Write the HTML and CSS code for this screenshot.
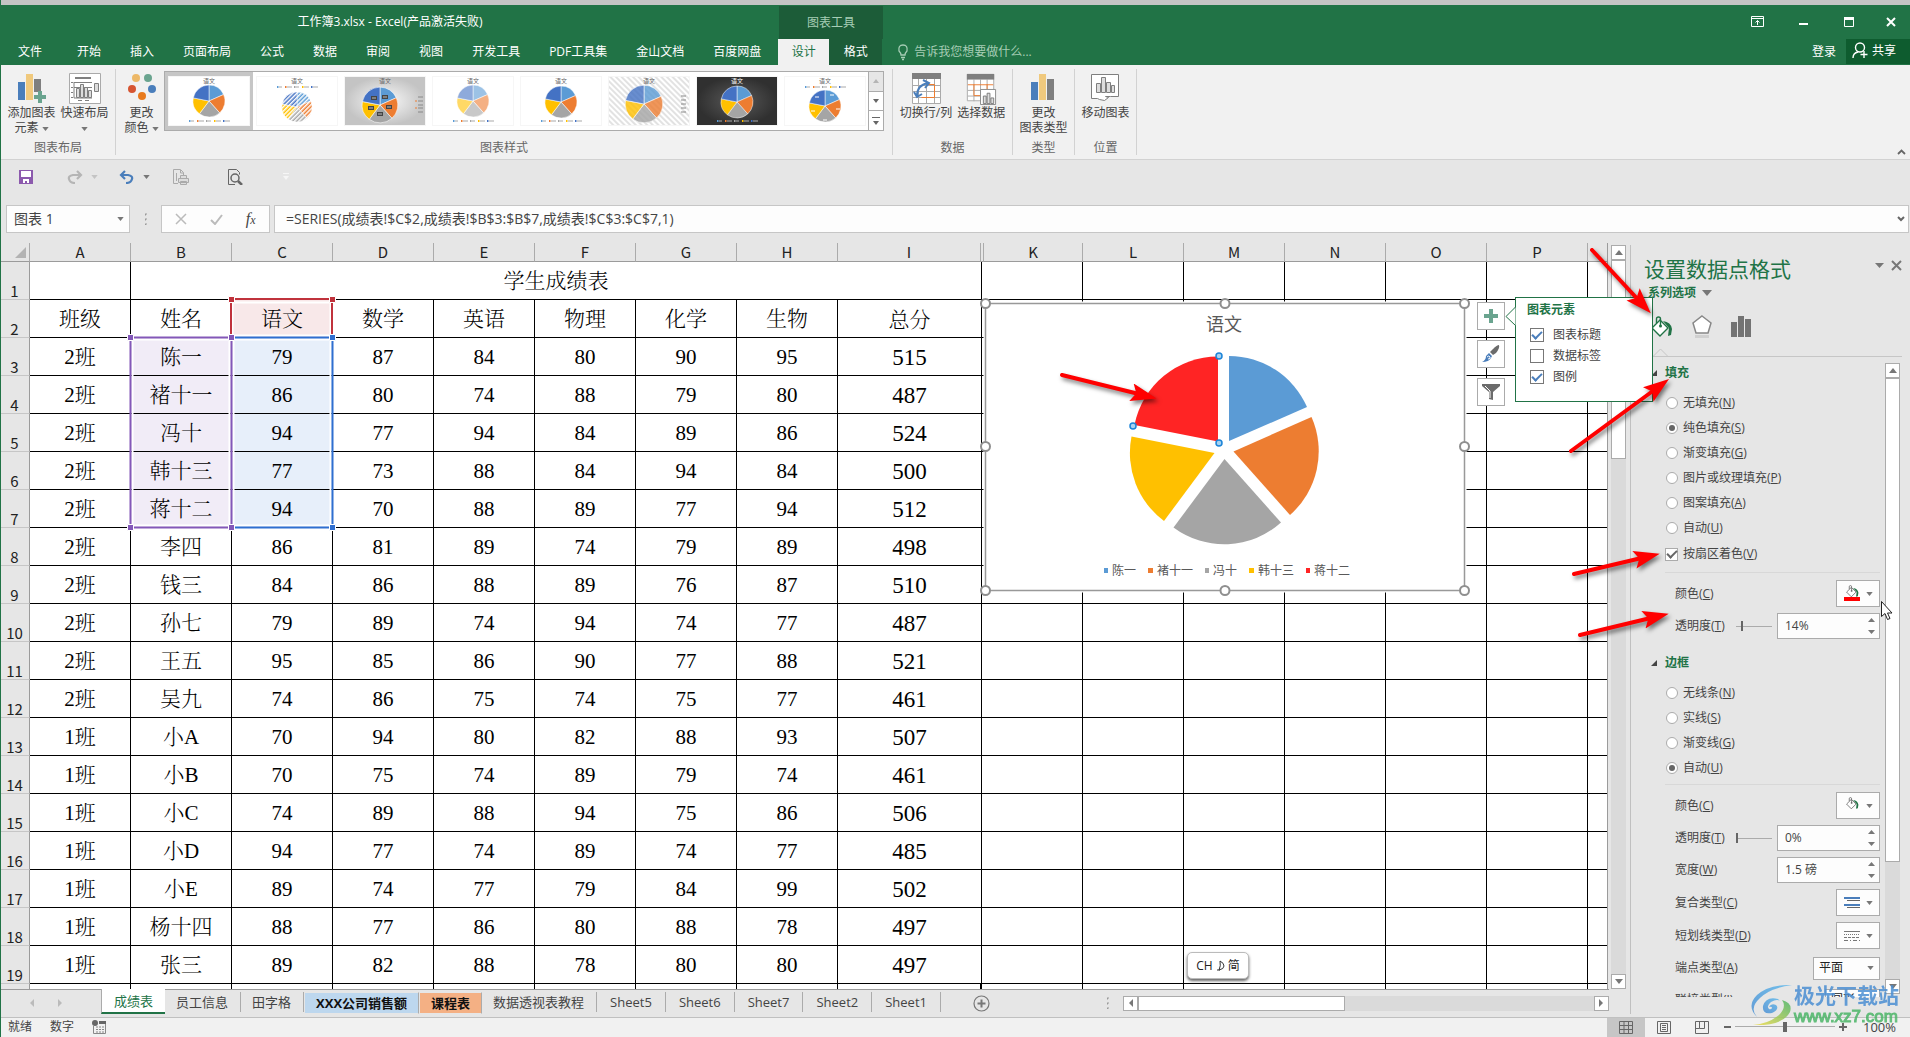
FILE: index.html
```html
<!DOCTYPE html>
<html lang="zh-CN">
<head>
<meta charset="utf-8">
<title>工作簿3.xlsx - Excel</title>
<link rel="stylesheet" href="styles.css">
</head>
<body>
<svg class="defs" width="0" height="0" aria-hidden="true">
  <defs>
    <pattern id="hatch" width="3" height="3" patternUnits="userSpaceOnUse" patternTransform="rotate(45)"><rect width="1.5" height="3" fill="#fff"/></pattern>
    <pattern id="stripes" width="4" height="4" patternUnits="userSpaceOnUse" patternTransform="rotate(-45)"><rect width="4" height="4" fill="#fff"/><rect width="2" height="4" fill="#e2e2e2"/></pattern>
    <radialGradient id="silver"><stop offset="0" stop-color="#fafafa"/><stop offset="1" stop-color="#c4c4c4"/></radialGradient>
    <radialGradient id="night"><stop offset="0" stop-color="#5a5a5a"/><stop offset="1" stop-color="#303030"/></radialGradient>
    <symbol id="pie" viewBox="-17 -17 34 34">
      <g stroke="#fff" stroke-width=".5">
      <path fill="#5b9bd5" d="M0 0V-16A16 16 0 0 1 14.6-6.5Z"/>
      <path fill="#ed7d31" d="M0 0 14.6-6.5A16 16 0 0 1 10.7 11.9Z"/>
      <path fill="#a5a5a5" d="M0 0 10.7 11.9A16 16 0 0 1-9.6 12.8Z"/>
      <path fill="#ffc000" d="M0 0-9.6 12.8A16 16 0 0 1-15.7-3.1Z"/>
      <path fill="#4472c4" d="M0 0-15.7-3.1A16 16 0 0 1 0-16Z"/>
      </g>
    </symbol>
    <symbol id="keys" viewBox="0 0 42 4">
      <g fill="#aaa"><path d="M3 1.500h3v1h-3zM11 1.500h5v1h-5zM20 1.500h3v1h-3zM28 1.500h5v1h-5zM37 1.500h5v1h-5z"/></g>
      <path fill="#5b9bd5" d="M1 1h1.500v2H1z"/><path fill="#ed7d31" d="M9 1h1.500v2H9z"/><path fill="#a5a5a5" d="M18 1h1.500v2h-1.500z"/><path fill="#ffc000" d="M26 1h1.500v2h-1.500z"/><path fill="#4472c4" d="M35 1h1.500v2h-1.500z"/>
    </symbol>
    <symbol id="bucket" viewBox="0 0 22 22">
      <path class="paint" d="M12 5q8 1 9 8l-1 6-3 1 1-8z"/>
      <path d="M1 12 9 4l8 8-8 8z" fill="#fff" stroke="currentColor" stroke-width="1.400"/>
      <path d="M5.500 7V3q0-2 2-2t2 2v7" fill="none" stroke="currentColor" stroke-width="1.400"/><circle cx="9.500" cy="10" r="1.500" fill="currentColor"/>
    </symbol>
    <symbol id="down" viewBox="0 0 8 5"><path d="M0 0h8L4 5z" fill="currentColor"/></symbol>
    <marker id="head" markerWidth="26" markerHeight="20" refX="16" refY="9" orient="auto" markerUnits="userSpaceOnUse"><path d="M0 0 26 9 0 18 5 9z" fill="#f00"/></marker>
  </defs>
</svg>

<header class="top">
  <div class="titlebar">
    <h1 class="doc-title">工作簿3.xlsx - Excel(产品激活失败)</h1>
    <div class="context-title">图表工具</div>
    <div class="window-buttons">
      <button aria-label="功能区显示选项"><svg width="13" height="11" fill="none" stroke="#fff"><path d="M.5.5h12v10H.5zM1 2.500h11M6.500 9V4.500M4.500 6.500l2-2 2 2"/></svg></button>
      <button aria-label="最小化"><svg width="10" height="10"><path d="M1 6h9v2H1z" fill="#fff"/></svg></button>
      <button aria-label="最大化"><svg width="10" height="10"><path d="M.5.5h9v9h-9z" fill="none" stroke="#fff"/><path d="M0 0h10v3H0z" fill="#fff"/></svg></button>
      <button aria-label="关闭"><svg width="10" height="10"><path d="m1 1 8 8m0-8L1 9" stroke="#fff" stroke-width="2"/></svg></button>
    </div>
  </div>
  <nav class="tabs">
    <button class="file">文件</button><button>开始</button><button>插入</button><button>页面布局</button><button>公式</button><button>数据</button><button>审阅</button><button>视图</button><button>开发工具</button><button>PDF工具集</button><button>金山文档</button><button class="last">百度网盘</button><button class="current">设计</button><button class="context">格式</button>
    <label class="tellme"><svg width="12" height="17" fill="none" stroke="#a6cdb5" stroke-width="1.300"><path d="M4 11q0-2-2-4-1-6 4-6t4 6q-2 2-2 4zM4 13.500h4M5 15.500h2"/></svg><input type="text" placeholder="告诉我您想要做什么..."></label>
    <button class="login">登录</button>
    <button class="share"><svg width="16" height="17" fill="none" stroke="#fff" stroke-width="1.400"><circle cx="8" cy="5.500" r="4.500"/><path d="M1 16q0-5 5-6M12 9v7M8.500 12.500h7"/></svg>共享</button>
  </nav>
</header>

<section class="ribbon">
  <div class="group first">
    <div class="tools">
      <button class="tool"><svg width="32" height="32"><path fill="#4a7ebb" d="M3 9h7v18H3z"/><path fill="#f0c97d" d="M11 1h7v26h-7z"/><path fill="#7f7f7f" d="M19 6h7v13h-7z"/><path fill="#6aa48f" d="M23 18h4v4h4v4h-4v4h-4v-4h-4v-4h4z"/></svg><span>添加图表<br>元素 <svg class="dd"><use href="#down"/></svg></span></button>
      <button class="tool"><svg width="32" height="32" fill="none" stroke="#7f7f7f"><path fill="#fff" stroke="#aaa" d="M.5.5h31v30H.5z"/><path stroke-width="2" d="M6 5h16"/><path d="M5 9.500h18M5 14.500h18M2 9.500h2M2 14.500h2M2 19.500h2M2 24.500h2M5 9v16h18M9 27.500h4M16 27.500h4"/><path fill="#ddd" d="M7.500 15.500h3v9h-3zM11.500 11.500h3v13h-3zM15.500 14.500h3v10h-3zM19.500 17.500h3v7h-3zM25.500 10.500h4v8h-4z"/></svg><span>快速布局<br><svg class="dd"><use href="#down"/></svg></span></button>
    </div>
    <div class="caption">图表布局</div>
  </div>
  <div class="group styles">
    <div class="tools">
      <button class="tool colors"><svg width="32" height="32"><circle cx="10" cy="5" r="4" fill="#edb867"/><circle cx="22" cy="5" r="4" fill="#6aa48f"/><circle cx="6" cy="16" r="4" fill="#d65532"/><circle cx="26" cy="16" r="4" fill="#4a7ebb"/><circle cx="16" cy="23" r="4" fill="#e87a1d"/></svg><span>更改<br>颜色 <svg class="dd"><use href="#down"/></svg></span></button>
      <div class="gallery">
        <button class="thumb chosen" aria-label="样式 1"><svg width="80" height="48"><rect width="80" height="48" fill="#fff"/><text x="40" y="6">语文</text><use href="#pie" x="23" y="7" width="34" height="34"/><use href="#keys" x="19" y="42" width="42" height="4"/></svg></button>
        <button class="thumb" aria-label="样式 2"><svg width="80" height="48"><text x="40" y="6">语文</text><use href="#keys" x="19" y="8" width="42" height="4"/><use href="#pie" x="24" y="14" width="32" height="32"/><circle cx="40" cy="30" r="15.500" fill="url(#hatch)"/></svg></button>
        <button class="thumb" aria-label="样式 3"><svg width="80" height="48"><rect width="80" height="48" fill="url(#silver)"/><text x="40" y="6">语文</text><use href="#pie" x="16" y="9" width="38" height="38"/><path fill="#444" d="M26 19h6v4h-6zM37 18h6v4h-6zM23 29h6v4h-6zM41 28h6v4h-6zM32 35h6v4h-6z"/><path stroke="#bbb" d="M27 21h4M38 20h4M24 31h4M42 30h4M33 37h4"/><path stroke="#888" d="M73 20h5M73 24h5M73 28h5M73 31h5M73 35h5"/><path stroke="#ed7d31" d="M70 24h2M70 31h2"/></svg></button>
        <button class="thumb" aria-label="样式 4"><svg width="80" height="48"><text x="40" y="6">语文</text><use href="#pie" x="23" y="7" width="34" height="34" opacity=".6"/><use href="#keys" x="19" y="42" width="42" height="4"/></svg></button>
        <button class="thumb" aria-label="样式 5"><svg width="80" height="48"><text x="40" y="6">语文</text><use href="#pie" x="23" y="8" width="34" height="34"/><use href="#keys" x="19" y="42" width="42" height="4"/></svg></button>
        <button class="thumb" aria-label="样式 6"><svg width="80" height="48"><rect width="80" height="48" fill="url(#stripes)"/><text x="40" y="6">语文</text><use href="#pie" x="15" y="7" width="40" height="40" opacity=".8"/><path stroke="#888" d="M72 19h5M72 23h5M72 27h5M72 31h5M72 35h5"/></svg></button>
        <button class="thumb" aria-label="样式 7"><svg width="80" height="48"><rect width="80" height="48" fill="url(#night)"/><text class="light" x="40" y="6">语文</text><use href="#pie" x="23" y="8" width="34" height="34"/><use href="#keys" x="19" y="42" width="42" height="4"/></svg></button>
        <button class="thumb" aria-label="样式 8"><svg width="80" height="48"><text x="40" y="6">语文</text><use href="#keys" x="19" y="8" width="42" height="4"/><use href="#pie" x="23" y="12" width="34" height="34"/><path stroke="#fff" d="M30 20h4M45 18h4M51 32h4M38 43h4M26 34h4"/></svg></button>
        <div class="gallery-nav">
          <button class="off" aria-label="上一行"><svg width="6" height="4"><path d="M0 4h6L3 0z" fill="#b5b5b5"/></svg></button>
          <button aria-label="下一行"><svg width="6" height="4"><path d="M0 0h6L3 4z" fill="#666"/></svg></button>
          <button aria-label="其他"><svg width="8" height="8"><path d="M0 0h8v1H0zM1 4h6L4 8z" fill="#666"/></svg></button>
        </div>
      </div>
    </div>
    <div class="caption">图表样式</div>
  </div>
  <div class="group wide">
    <div class="tools">
      <button class="tool"><svg width="32" height="32" fill="none" stroke="#aaa"><path fill="#fff" d="M2.500.5h28v30h-28z"/><path d="M8.500 5v25M16.500 5v25M24.500 5v25M3 12.500h27M3 18.500h27M3 24.500h27"/><path fill="#7f7f7f" stroke="none" d="M2 0h29v6H2z"/><path stroke="#ed7d31" d="M16.500 11.500h8v13h-13"/><path stroke="#4a7ebb" stroke-width="2" d="M7 23q0-11 11-13M13 7l6 3-4 5M4 19l3 5 5-3"/></svg><span>切换行/列</span></button>
      <button class="tool"><svg width="32" height="32" viewBox="0 0 32 34" fill="none" stroke="#aaa"><path fill="#fff" d="M1.500 1.500h28v28h-28z"/><path d="M8.500 7v23M15.500 7v23M22.500 7v23M2 18.500h27M2 24.500h27"/><path fill="#7f7f7f" stroke="none" d="M1 1h29v6H1z"/><path stroke="#ed7d31" d="M2 12.500h27M8.500 12v12h8M22.500 12v6"/><path fill="#fff" stroke="#888" d="M15.500 17.500h16v16h-16z"/><path stroke="#777" fill="#ddd" d="M18.500 24.500h3v8h-3zM22.500 21.500h3v11h-3zM26.500 26.500h3v6h-3z"/></svg><span>选择数据</span></button>
    </div>
    <div class="caption">数据</div>
  </div>
  <div class="group">
    <div class="tools">
      <button class="tool"><svg width="32" height="32"><path fill="#4a7ebb" d="M4 9h7v18H4z"/><path fill="#f0c97d" d="M12 1h7v26h-7z"/><path fill="#7f7f7f" d="M20 6h7v21h-7z"/></svg><span>更改<br>图表类型</span></button>
    </div>
    <div class="caption">类型</div>
  </div>
  <div class="group">
    <div class="tools">
      <button class="tool"><svg width="32" height="32" fill="none" stroke="#7f7f7f"><path fill="#fff" d="M2.500 1.500h27v22h-8l-5 0 3 1-4 3-5-1-2-1h-6z"/><path fill="#ddd" d="M7.500 10.500h4v9h-4zM12.500 4.500h4v15h-4zM17.500 9.500h4v10h-4zM22.500 12.500h3v7h-3z"/></svg><span>移动图表</span></button>
    </div>
    <div class="caption">位置</div>
  </div>
  <button class="collapse" aria-label="折叠功能区"><svg width="9" height="6"><path d="m1 5 3.500-3.500L8 5" fill="none" stroke="#666" stroke-width="1.800"/></svg></button>
</section>

<section class="quick">
  <button aria-label="保存"><svg width="14" height="14"><path d="M0 0h14v14H0z" fill="#8c5aad"/><path d="M2 1h10v6H2zM4 9h6v4H8v-2H6v2H4z" fill="#fff"/></svg></button>
  <button class="redo" aria-label="恢复"><svg width="16" height="14" fill="none" stroke="#b5b5b5" stroke-width="2.200"><path d="M10 1l4 4-4 4M13 5H6q-5 1-4 4 1 4 6 4"/></svg><svg class="dd pale"><use href="#down"/></svg></button>
  <button class="undo" aria-label="撤消"><svg width="16" height="14" fill="none" stroke="#4a7ebb" stroke-width="2.200"><path d="M6 1 2 5l4 4M3 5h6q5 1 4 4-1 4-6 4"/></svg><svg class="dd"><use href="#down"/></svg></button>
  <button aria-label="快速打印"><svg width="17" height="16" fill="none" stroke="#aaa"><path d="M5 14.500H.5V.5h7l3 3v3M7.500 1v3h3M3.500 4v8"/><path fill="#ddd" d="M5.500 9.500h10v4h-10zM7.500 6.500h6v3h-6zM7.500 12.500h6v3h-6z"/></svg></button>
  <button class="preview" aria-label="打印预览"><svg width="15" height="16" fill="none" stroke="#666"><path d="M7 15.500H.5V.5h8l3 3v2"/><circle cx="7" cy="9" r="4" stroke-width="1.500"/><path stroke-width="2.500" d="m10 12 4 4"/></svg></button>
  <button class="more" aria-label="自定义快速访问工具栏"><svg width="6" height="8"><path d="M0 0h6v1H0zM0 3h6L3 7z" fill="#f6f6f6"/></svg></button>
</section>

<section class="formula-bar">
  <div class="namebox"><input type="text" value="图表 1" aria-label="名称框"><svg class="dd"><use href="#down"/></svg></div>
  <span class="grip"></span>
  <div class="fx">
    <button aria-label="取消"><svg width="12" height="12"><path d="m1 1 10 10M11 1 1 11" stroke="#bbb" stroke-width="1.500"/></svg></button>
    <button aria-label="输入"><svg width="13" height="11"><path d="m1 6 4 4 7-9" fill="none" stroke="#bbb" stroke-width="2"/></svg></button>
    <button class="fn" aria-label="插入函数"><i>f<small>x</small></i></button>
  </div>
  <div class="formula"><input type="text" value="=SERIES(成绩表!$C$2,成绩表!$B$3:$B$7,成绩表!$C$3:$C$7,1)" aria-label="编辑栏"><svg width="8" height="6"><path d="m1 1 3 3 3-3" fill="none" stroke="#666" stroke-width="2"/></svg></div>
</section>

<main class="workspace">
  <div class="book">
    <div class="view">
      <div class="sheet">
        <table class="grid">
          <colgroup><col class="c-num"><col class="c"><col class="c"><col class="c"><col class="c"><col class="c"><col class="c"><col class="c"><col class="c"><col class="c-sum"><col class="c-thin"><col class="c-k"><col class="c"><col class="c"><col class="c"><col class="c"><col class="c"><col></colgroup>
          <thead><tr><th class="corner"><svg width="11" height="11"><path d="M11 0v11H0z" fill="#b3b3b3"/></svg><th>A<th>B<th>C<th>D<th>E<th>F<th>G<th>H<th>I<th><th>K<th>L<th>M<th>N<th>O<th>P<th></tr></thead>
          <tbody>
          <tr><th>1<td><td colspan="8">学生成绩表<td class="j"><td><td><td><td><td><td><td></tr>
          <tr><th>2<td>班级<td>姓名<td class="series">语文<td>数学<td>英语<td>物理<td>化学<td>生物<td class="sum head">总分<td class="j"><td><td><td><td><td><td><td></tr>
          <tr><th>3<td>2班<td class="cat">陈一<td class="val">79<td>87<td>84<td>80<td>90<td>95<td class="sum">515<td class="j"><td><td><td><td><td><td><td></tr>
          <tr><th>4<td>2班<td class="cat">褚十一<td class="val">86<td>80<td>74<td>88<td>79<td>80<td class="sum">487<td class="j"><td><td><td><td><td><td><td></tr>
          <tr><th>5<td>2班<td class="cat">冯十<td class="val">94<td>77<td>94<td>84<td>89<td>86<td class="sum">524<td class="j"><td><td><td><td><td><td><td></tr>
          <tr><th>6<td>2班<td class="cat">韩十三<td class="val">77<td>73<td>88<td>84<td>94<td>84<td class="sum">500<td class="j"><td><td><td><td><td><td><td></tr>
          <tr><th>7<td>2班<td class="cat">蒋十二<td class="val">94<td>70<td>88<td>89<td>77<td>94<td class="sum">512<td class="j"><td><td><td><td><td><td><td></tr>
          <tr><th>8<td>2班<td>李四<td>86<td>81<td>89<td>74<td>79<td>89<td class="sum">498<td class="j"><td><td><td><td><td><td><td></tr>
          <tr><th>9<td>2班<td>钱三<td>84<td>86<td>88<td>89<td>76<td>87<td class="sum">510<td class="j"><td><td><td><td><td><td><td></tr>
          <tr><th>10<td>2班<td>孙七<td>79<td>89<td>74<td>94<td>74<td>77<td class="sum">487<td class="j"><td><td><td><td><td><td><td></tr>
          <tr><th>11<td>2班<td>王五<td>95<td>85<td>86<td>90<td>77<td>88<td class="sum">521<td class="j"><td><td><td><td><td><td><td></tr>
          <tr><th>12<td>2班<td>吴九<td>74<td>86<td>75<td>74<td>75<td>77<td class="sum">461<td class="j"><td><td><td><td><td><td><td></tr>
          <tr><th>13<td>1班<td>小A<td>70<td>94<td>80<td>82<td>88<td>93<td class="sum">507<td class="j"><td><td><td><td><td><td><td></tr>
          <tr><th>14<td>1班<td>小B<td>70<td>75<td>74<td>89<td>79<td>74<td class="sum">461<td class="j"><td><td><td><td><td><td><td></tr>
          <tr><th>15<td>1班<td>小C<td>74<td>89<td>88<td>94<td>75<td>86<td class="sum">506<td class="j"><td><td><td><td><td><td><td></tr>
          <tr><th>16<td>1班<td>小D<td>94<td>77<td>74<td>89<td>74<td>77<td class="sum">485<td class="j"><td><td><td><td><td><td><td></tr>
          <tr><th>17<td>1班<td>小E<td>89<td>74<td>77<td>79<td>84<td>99<td class="sum">502<td class="j"><td><td><td><td><td><td><td></tr>
          <tr><th>18<td>1班<td>杨十四<td>88<td>77<td>86<td>80<td>88<td>78<td class="sum">497<td class="j"><td><td><td><td><td><td><td></tr>
          <tr><th>19<td>1班<td>张三<td>89<td>82<td>88<td>78<td>80<td>80<td class="sum">497<td class="j"><td><td><td><td><td><td><td></tr>
          <tr><th><td><td><td><td><td><td><td><td><td><td class="j"><td><td><td><td><td><td><td></tr>
          </tbody>
        </table>

        <svg class="ranges" width="214" height="240" viewBox="124 293 214 240" fill="none" stroke-width="2" aria-hidden="true">
          <path stroke="#fff" d="M232.500 302.500h98v33h-98zM132.500 339.500h97v186h-97zM233.500 339.500h97v186h-97z"/>
          <path stroke="#c0323c" d="M231 338v-39h101v39"/>
          <path stroke="#8358b8" d="M130.500 337.500h101v190h-101z"/>
          <path stroke="#2f6fd0" d="M232 337.500h100.500v190H232"/>
          <g stroke="#fff" stroke-width="1">
          <path fill="#c0323c" d="M228.500 296.500h6v6h-6zM329.500 296.500h6v6h-6z"/>
          <path fill="#8358b8" d="M127.500 334.500h6v6h-6zM228.500 334.500h6v6h-6zM127.500 524.500h6v6h-6zM228.500 524.500h6v6h-6z"/>
          <path fill="#2f6fd0" d="M329.500 334.500h6v6h-6zM329.500 524.500h6v6h-6z"/></g>
        </svg>

        <svg class="chart" width="494" height="302" viewBox="978 296 494 302" role="img" aria-label="语文">
          <path d="M983.500 301.500h483v291h-483z" fill="#fff"/>
          <path d="M985.500 303.500h479v287h-479z" fill="#fff" stroke="#999" stroke-width="1.500"/>
          <text class="chart-title" x="1224" y="331">语文</text>
          <path fill="#5b9bd5" d="M1229 441V356A85 85 0 0 1 1307 407Z"/>
          <path fill="#ed7d31" d="M1233.500 451.500 1311.500 417A85 85 0 0 1 1290 515Z"/>
          <path fill="#a5a5a5" d="M1224.500 459 1281 522.500A85 85 0 0 1 1173.500 527.500Z"/>
          <path fill="#ffc000" d="M1214.500 453 1164 521A85 85 0 0 1 1131.500 436.500Z"/>
          <path fill="#ff2424" d="M1218 441.500 1134.500 425A85 85 0 0 1 1218 356.500Z"/>
          <g fill="#a9d3f2" stroke="#1c84d8" stroke-width="1.500"><circle cx="1219" cy="356" r="3"/><circle cx="1133" cy="426" r="3"/><circle cx="1219" cy="443" r="3"/></g>
          <path fill="#5b9bd5" d="M1104 568h4v5h-4z"/><path fill="#ed7d31" d="M1148 568h5v5h-5z"/><path fill="#a5a5a5" d="M1205 568h4v5h-4z"/><path fill="#ffc000" d="M1249 568h5v5h-5z"/><path fill="#ff2424" d="M1306 568h4v5h-4z"/>
          <g class="legend"><text x="1112" y="575">陈一</text><text x="1157" y="575">褚十一</text><text x="1213" y="575">冯十</text><text x="1258" y="575">韩十三</text><text x="1314" y="575">蒋十二</text></g>
          <g fill="#fff" stroke="#8f8f8f" stroke-width="2"><circle cx="985.500" cy="303.500" r="4.500"/><circle cx="1225" cy="303.500" r="4.500"/><circle cx="1464.500" cy="303.500" r="4.500"/><circle cx="985.500" cy="446.500" r="4.500"/><circle cx="1464.500" cy="446.500" r="4.500"/><circle cx="985.500" cy="590.500" r="4.500"/><circle cx="1225" cy="590.500" r="4.500"/><circle cx="1464.500" cy="590.500" r="4.500"/></g>
          <path class="arrow" d="M1062 375 1147 396" marker-end="url(#head)"/>
        </svg>

        <div class="chart-buttons">
          <button aria-label="图表元素"><svg width="14" height="14"><path d="M5 0h4v5h5v4H9v5H5V9H0V5h5z" fill="#6aa48f"/></svg></button>
          <button aria-label="图表样式"><svg width="20" height="20"><path d="M18 1q1 3-3 8l-3 2-3-3 3-3q4-4 6-4z" fill="#6b6b6b"/><path d="m8 9 3 3-1 2q-2 4-9 4 4-2 4-6z" fill="#4a7ebb"/><path d="M6 13q2-2 3 0t-2 2" fill="none" stroke="#fff"/></svg></button>
          <button aria-label="图表筛选器"><svg width="18" height="17"><path d="M0 0h18v2l-7 6v8l-4-1V8L0 2z" fill="#6b6b6b"/><path d="m3 2 5 5v7" stroke="#fff" fill="none"/></svg></button>
        </div>
        <div class="ime">CH <svg width="9" height="11" fill="none" stroke="#333"><path d="M4 1q4 2 4 5T3 10q2-4 1-9M1 10h3"/></svg> 简</div>
      </div>
      <div class="vscroll"><button aria-label="向上"><svg width="8" height="5"><path d="M0 5h8L4 0z" fill="#777"/></svg></button><span class="thumb-v"></span><button class="end" aria-label="向下"><svg width="8" height="5"><path d="M0 0h8L4 5z" fill="#777"/></svg></button></div>
    </div>

    <div class="sheetbar">
      <div class="sheetnav"><svg width="5" height="8"><path d="M5 0v8L1 4z" fill="#bbb"/></svg><svg width="5" height="8"><path d="M0 0v8l4-4z" fill="#bbb"/></svg></div>
      <div class="sheet-tabs"><button class="on">成绩表</button><button>员工信息</button><button>田字格</button><button class="tint blue"><b>XXX公司销售额</b></button><button class="tint orange"><b>课程表</b></button><button>数据透视表教程</button><button class="latin">Sheet5</button><button class="latin">Sheet6</button><button class="latin">Sheet7</button><button class="latin">Sheet2</button><button class="latin">Sheet1</button></div>
      <button class="add" aria-label="新工作表"><svg width="17" height="17"><circle cx="8.500" cy="8.500" r="7.500" fill="none" stroke="#777" stroke-width="1.200"/><path d="M4.500 7.500h3v-3h2v3h3v2h-3v3h-2v-3h-3z" fill="#777"/></svg></button>
      <span class="grip"></span>
      <div class="hscroll"><button aria-label="向左"><svg width="5" height="8"><path d="M5 0v8L1 4z" fill="#777"/></svg></button><span class="thumb-h"></span><button class="end" aria-label="向右"><svg width="5" height="8"><path d="M0 0v8l4-4z" fill="#777"/></svg></button></div>
    </div>
  </div>

  <aside class="pane">
    <div class="pane-head"><h2>设置数据点格式</h2><button aria-label="窗格选项"><svg width="9" height="5"><path d="M0 0h9L4.500 5z" fill="#777"/></svg></button><button aria-label="关闭窗格"><svg width="11" height="11"><path d="m1 1 9 9m0-9-9 9" stroke="#777" stroke-width="2"/></svg></button></div>
    <button class="pane-sub">系列选项 <svg width="10" height="6"><path d="M0 0h10L5 6z" fill="#777"/></svg></button>
    <div class="pane-icons">
      <button class="fill-tab" aria-label="填充与线条"><svg width="22" height="24"><use href="#bucket" width="22" height="24"/></svg></button>
      <button aria-label="效果"><svg width="20" height="24"><path d="m10 1 9 7-3 10H4L1 8z" fill="#fff" stroke="#888" stroke-width="1.500"/><path d="M3 20h14v3H3z" fill="#d0d0d0"/></svg></button>
      <button aria-label="系列选项"><svg width="20" height="22"><path d="M0 6h6v15H0zM7 0h6v21H7zM14 3h6v18h-6z" fill="#737373"/></svg></button>
    </div>
    <svg class="notch" width="16" height="9"><path d="M0 8.500 7.500 1 15 8.500" fill="#e6e6e6" stroke="#c6c6c6"/></svg>
    <div class="pane-body">
      <form class="options">
        <fieldset>
          <legend><svg width="6" height="6"><path d="M6 0v6H0z" fill="#444"/></svg>填充</legend>
          <label class="opt"><input type="radio" name="fill">无填充(<u>N</u>)</label>
          <label class="opt"><input type="radio" name="fill" checked>纯色填充(<u>S</u>)</label>
          <label class="opt"><input type="radio" name="fill">渐变填充(<u>G</u>)</label>
          <label class="opt"><input type="radio" name="fill">图片或纹理填充(<u>P</u>)</label>
          <label class="opt"><input type="radio" name="fill">图案填充(<u>A</u>)</label>
          <label class="opt"><input type="radio" name="fill">自动(<u>U</u>)</label>
          <label class="opt tall"><input type="checkbox" checked>按扇区着色(<u>V</u>)</label>
          <hr>
          <div class="row"><label for="fc">颜色(<u>C</u>)</label><button id="fc" class="pick" type="button"><svg width="16" height="17"><use href="#bucket" x="1" width="15" height="13"/><path d="M0 12h16v4H0z" fill="#f00"/></svg><svg class="dd"><use href="#down"/></svg></button></div>
          <div class="row"><label for="ft">透明度(<u>T</u>)</label><input class="slide" type="range" min="0" max="100" value="14" aria-label="填充透明度"><span class="spin"><input id="ft" type="text" value="14%"><svg width="7" height="16"><path d="M0 4h7L3.500 0zM0 12h7L3.500 16z" fill="#777"/></svg></span></div>
        </fieldset>
        <fieldset>
          <legend><svg width="6" height="6"><path d="M6 0v6H0z" fill="#444"/></svg>边框</legend>
          <label class="opt"><input type="radio" name="line">无线条(<u>N</u>)</label>
          <label class="opt"><input type="radio" name="line">实线(<u>S</u>)</label>
          <label class="opt"><input type="radio" name="line">渐变线(<u>G</u>)</label>
          <label class="opt"><input type="radio" name="line" checked>自动(<u>U</u>)</label>
          <hr>
          <div class="row"><label for="lc">颜色(<u>C</u>)</label><button id="lc" class="pick" type="button"><svg width="16" height="17"><use href="#bucket" x="1" width="15" height="13"/></svg><svg class="dd"><use href="#down"/></svg></button></div>
          <div class="row"><label for="lt">透明度(<u>T</u>)</label><input class="slide" type="range" min="0" max="100" value="0" aria-label="线条透明度"><span class="spin"><input id="lt" type="text" value="0%"><svg width="7" height="16"><path d="M0 4h7L3.500 0zM0 12h7L3.500 16z" fill="#777"/></svg></span></div>
          <div class="row"><label for="lw">宽度(<u>W</u>)</label><span class="spin"><input id="lw" type="text" value="1.5 磅"><svg width="7" height="16"><path d="M0 4h7L3.500 0zM0 12h7L3.500 16z" fill="#777"/></svg></span></div>
          <div class="row"><label for="cp">复合类型(<u>C</u>)</label><button id="cp" class="pick" type="button"><svg width="16" height="12"><path d="M0 0h16v2H0zM0 7h16v2H0z" fill="#4a7ebb"/><path d="M3 3h13v1H3zM3 10h13v1H3z" fill="#666"/></svg><svg class="dd"><use href="#down"/></svg></button></div>
          <div class="row"><label for="ds">短划线类型(<u>D</u>)</label><button id="ds" class="pick" type="button"><svg width="16" height="12" stroke="#777"><path d="M0 1.500h16"/><path stroke-dasharray="1 1" d="M0 4.500h16"/><path stroke-dasharray="3 1" d="M0 7.500h16"/><path stroke-dasharray="4 2 1 2" d="M0 10.500h16"/></svg><svg class="dd"><use href="#down"/></svg></button></div>
          <div class="row"><label for="ed">端点类型(<u>A</u>)</label><span class="drop"><select id="ed"><option>平面</option></select><svg class="dd"><use href="#down"/></svg></span></div>
          <div class="row"><label for="jn">联接类型(<u>J</u>)</label><span class="drop narrow"><select id="jn"><option>圆形</option></select><svg class="dd"><use href="#down"/></svg></span></div>
        </fieldset>
      </form>
      <div class="vscroll"><button aria-label="向上滚动"><svg width="8" height="5"><path d="M0 5h8L4 0z" fill="#777"/></svg></button><span class="thumb-v"></span><button class="end" aria-label="向下滚动"><svg width="8" height="5"><path d="M0 0h8L4 5z" fill="#777"/></svg></button></div>
    </div>
  </aside>

  <div class="flyout">
    <svg class="beak" width="11" height="19"><path d="M10.500 0 1 9.500l9.500 9" fill="#fff" stroke="#217346"/></svg>
    <h3>图表元素</h3>
    <label><input type="checkbox" checked>图表标题</label>
    <label><input type="checkbox">数据标签</label>
    <label><input type="checkbox" checked>图例</label>
  </div>
</main>

<footer class="status">
  <span>就绪</span><span>数字</span>
  <svg width="14" height="14"><circle cx="3" cy="3" r="3" fill="#666"/><path d="M7 1h7v3H7z" fill="#666"/><path d="M1.500 6v7.500h12V4" fill="none" stroke="#888"/><path d="M4 7h8M4 9.500h8M4 12h8" stroke="#888" stroke-dasharray="2 1"/></svg>
  <div class="views">
    <button class="on" aria-label="普通"><svg width="14" height="13" fill="none" stroke="#666"><path d="M.5.5h13v12H.5zM.5 4.500h13M.5 8.500h13M5 .5v12M9.500.5v12"/></svg></button>
    <button aria-label="页面布局"><svg width="14" height="13" fill="none" stroke="#666"><path d="M.5.5h13v12H.5zM3.500 2.500h7v8h-7zM5 4.500h4M5 6.500h4M5 8.500h4"/></svg></button>
    <button aria-label="分页预览"><svg width="14" height="13" fill="none" stroke="#666"><path d="M.5.5h13v12H.5zM4.500.5v7h5v-7M.5 7.500h4"/></svg></button>
  </div>
  <div class="zoom"><button aria-label="缩小"><svg width="7" height="2"><path d="M0 0h7v2H0z" fill="#666"/></svg></button><input type="range" min="0" max="100" value="50" aria-label="缩放"><button aria-label="放大"><svg width="8" height="8"><path d="M3 0h2v3h3v2H5v3H3V5H0V3h3z" fill="#666"/></svg></button><span>100%</span></div>
</footer>

<svg class="notes" width="360" height="660" viewBox="1550 0 360 660" aria-hidden="true">
  <path class="arrow" d="M1592 250 1644 306" marker-end="url(#head)"/>
  <path class="arrow" d="M1571 451 1661 385" marker-end="url(#head)"/>
  <path class="arrow" d="M1574 574 1650 556" marker-end="url(#head)"/>
  <path class="arrow" d="M1580 635 1659 616" marker-end="url(#head)"/>
  <path d="M1881.500 601.500v15l3.500-3 2.500 6 2.500-1-2.500-5.500h4.500z" fill="#fff" stroke="#222"/>
</svg>
<div class="watermark">
  <svg width="43" height="42" fill="none"><defs><linearGradient id="swoosh" x1="0" y1="1" x2="1" y2="0"><stop offset="0" stop-color="#4b8fd3"/><stop offset="1" stop-color="#5fb9ec"/></linearGradient><linearGradient id="leaf" x1="0" y1="1" x2="1" y2="0"><stop offset="0" stop-color="#f2dc4b"/><stop offset="1" stop-color="#4bb567"/></linearGradient></defs>
  <path d="M7 33Q-4 22 7 11 19 0 42 1 20 4 10 14-1 24 7 33z" fill="url(#swoosh)"/><path d="M3 41q15-1 26-10 8-8 3-15 11 3 8 12Q33 42 3 41z" fill="url(#leaf)"/><path d="M28 15Q16 12 13 22q-1 9 9 7 8-4 4-8-5-2-7 2 3-1 3 1-1 2-3 1-3-3 2-7 7-4 10 0" fill="url(#swoosh)"/></svg>
  <div><strong>极光下载站</strong><em>www.xz7.com</em></div>
</div>
</body>
</html>
```
FILE: styles.css
```css
* { box-sizing: border-box; }
html, body { height: 100%; }
body {
  margin: 0;
  display: flex;
  flex-direction: column;
  position: relative;
  overflow: hidden;
  border-left: 1px solid #217346;
  background: #e6e6e6;
  color: #444;
  font: 12px/16px "Open Sans", "Noto Sans CJK SC", sans-serif;
}
button, input, select { font: inherit; color: inherit; }
button { border: 0; padding: 0; background: none; display: inline-flex; align-items: center; justify-content: center; }
input[type="text"] { border: 0; padding: 0; background: none; outline: 0; min-width: 0; }
svg { flex: none; display: block; }
.defs { position: absolute; }
.dd { display: inline-block; width: 7px; height: 4px; color: #777; vertical-align: middle; }
.pale { color: #c4c4c4; }

/* title bar and tabs */
.top { background: #217346; color: #fff; border-top: 5px solid #c4c4c4; flex: none; }
.titlebar { display: flex; height: 34px; align-items: center; padding-bottom: 1px; }
.doc-title { flex: none; width: 778px; margin: 0; text-align: center; font-size: 12px; font-weight: 400; }
.context-title { width: 104px; height: 33px; line-height: 33px; align-self: flex-end; margin-bottom: -1px; background: #1c5c38; color: #a6cdb5; text-align: center; }
.window-buttons { margin-left: auto; display: flex; }
.window-buttons button { width: 46px; height: 32px; }
.window-buttons button:last-child { width: 38px; }
.tabs { display: flex; height: 26px; align-items: stretch; }
.tabs > button { padding: 0 14px 1px; margin-right: 1px; }
.tabs > .file { padding: 0 20px 1px 17px; }
.tabs > .last { padding-right: 17px; margin: 0; }
.tabs > .current { width: 51px; padding: 0 0 1px; margin: 0; background: #f1f1f1; color: #217346; }
.tabs > .context { width: 53px; margin: 0; background: #1c5c38; }
.tellme { display: flex; align-items: center; gap: 5px; margin-left: 15px; }
.tellme input { width: 130px; }
.tellme input::placeholder { color: #a6cdb5; opacity: 1; }
.tabs > .login { margin-left: auto; margin-right: 10px; padding: 0; }
.tabs > .share { width: 64px; margin: 0 0 1px; padding: 0 8px 2px 0; gap: 4px; background: #0e5c2f; }

/* ribbon */
.ribbon { display: flex; flex: none; position: relative; height: 95px; padding: 4px 0; background: #f1f1f1; border-bottom: 1px solid #d2d2d2; }
.group { display: flex; flex-direction: column; justify-content: space-between; width: 62px; border-right: 1px solid #d2d2d2; }
.group.first { width: 115px; }
.group.wide { width: 120px; }
.group.styles { width: auto; padding: 0 8px; }
.tools { display: flex; gap: 5px; justify-content: center; }
.caption { text-align: center; color: #666; line-height: 14px; }
.tool { flex-direction: column; align-items: center; justify-content: flex-start; padding-top: 4px; line-height: 15px; min-width: 48px; }
.tool.colors { min-width: 35px; }
.gallery { display: flex; height: 60px; margin-top: 2px; background: #fff; border: 1px solid #ababab; }
.thumb { width: 88px; border: 4px solid transparent; }
.thumb.chosen { border-color: #c6c6c6; }
.thumb svg { outline: 1px solid #f6f6f6; }
.thumb text { font-size: 6px; text-anchor: middle; fill: #666; }
.thumb .light { fill: #fff; }
.gallery-nav { width: 15px; display: flex; flex-direction: column; border-left: 1px solid #ababab; margin-left: -1px; }
.gallery-nav button { flex: 1; border-bottom: 1px solid #ababab; }
.gallery-nav button:last-child { border: 0; }
.gallery-nav .off { background: #e6e6e6; }
.collapse { position: absolute; right: 4px; bottom: 4px; }

/* quick access */
.quick { display: flex; flex: none; height: 45px; align-items: center; padding: 0 0 12px 18px; }
.quick button { gap: 8px; margin-right: 34px; }
.quick .redo { margin-right: 21px; }
.quick .undo { margin-right: 23px; }
.quick .preview { margin-left: 4px; }
.quick .more { margin-left: 6px; }

/* formula bar */
.formula-bar { display: flex; flex: none; height: 28px; font-size: 14px; padding: 0 1px 0 5px; }
.formula-bar > div { display: flex; align-items: center; background: #fdfdfd; border: 1px solid #c6c6c6; }
.namebox { width: 124px; padding: 0 5px 0 7px; justify-content: space-between; }
.namebox input { width: 90px; }
.grip { width: 31px; height: 12px; align-self: center; background: radial-gradient(circle, #999 1px, transparent 1px) center / 31px 5px; }
.fx { width: 109px; margin-right: 4px; justify-content: space-around; padding: 0 2px; }
.fn { font: 16px "Liberation Serif", serif; }
.fn small { font-size: 12px; }
.formula { flex: 1; padding: 0 3px 0 11px; }
.formula input { flex: 1; }

/* worksheet */
.workspace { flex: 1; min-height: 0; display: flex; position: relative; }
.book { flex: 1; min-width: 0; display: flex; flex-direction: column; }
.view { flex: 1; min-height: 0; display: flex; }
.sheet { flex: 1; min-width: 0; position: relative; overflow: hidden; padding-top: 10px; }
.grid { width: 100%; table-layout: fixed; border-collapse: separate; border-spacing: 0; border-right: 1px solid #9b9b9b; }
.c-num { width: 29px; }
.c { width: 101px; }
.c-sum { width: 143px; }
.c-thin { width: 3px; }
.c-k { width: 99px; }
.grid th { padding: 0; font: 400 15px/16px "Noto Sans CJK SC", sans-serif; color: #222; background: #e6e6e6; border-right: 1px solid #ababab; border-bottom: 1px solid #ababab; }
.grid thead th { height: 19px; border-bottom-color: #9b9b9b; }
.grid tr > :last-child { border-right: 0; }
.grid .corner svg { margin: 0 0 0 14px; }
.grid tbody th { height: 38px; vertical-align: bottom; padding-right: 1px; border-right-color: #9b9b9b; border-bottom-color: #c6c6c6; }
.grid td { padding: 1px 0 0; height: 38px; line-height: 24px; background: #fff; border-right: 1px solid #000; border-bottom: 1px solid #000; text-align: center; vertical-align: middle; color: #000; font-family: "Liberation Serif", "Noto Serif CJK SC", "Noto Sans CJK SC", serif; font-size: 21px; font-weight: 300; white-space: nowrap; }
.grid .sum { padding-top: 2px; font-size: 23px; border-right: 0; }
.grid .sum.head { font-size: 21px; }
.grid td[colspan] { border-right: 0; }
.grid .j { border-left: 1px solid #000; border-right: 0; }
.grid .series { background: #f8e8e9; }
.grid .cat { background: #f1ecf7; }
.grid .val { background: #e7effa; }

/* objects floating on the sheet */
.ranges { position: absolute; left: 123px; top: 60px; }
.chart { position: absolute; left: 977px; top: 63px; }
.chart-title { font-size: 18px; text-anchor: middle; fill: #595959; }
.legend { font-size: 12px; fill: #595959; }
.arrow { fill: none; stroke: #f00; stroke-width: 4; stroke-linecap: round; filter: drop-shadow(2px 3px 2px rgba(0, 0, 0, .5)); }
.chart-buttons { position: absolute; left: 1476px; top: 69px; display: flex; flex-direction: column; gap: 10px; }
.chart-buttons button { width: 28px; height: 28px; background: #fff; border: 1px solid #ababab; }
.ime { position: absolute; left: 1186px; top: 719px; width: 62px; height: 27px; display: flex; align-items: center; justify-content: center; gap: 3px; background: #fff; border: 1px solid #bbb; border-radius: 5px; box-shadow: 0 2px 3px #666; color: #222; }
.flyout { position: absolute; right: 257px; top: 64px; width: 138px; height: 105px; padding: 4px 11px; background: #fff; border: 1px solid #217346; }
.flyout h3 { margin: 0 0 6px; font-size: 12px; line-height: 16px; color: #217346; }
.flyout label { display: flex; align-items: center; gap: 9px; height: 21px; padding-left: 3px; }
.beak { position: absolute; left: -11px; top: 9px; }

/* scroll bars */
.vscroll { flex: none; display: flex; flex-direction: column; width: 15px; background: #dadada; }
.view .vscroll { margin: 12px 4px 0 3px; }
.vscroll button, .hscroll button { flex: none; width: 15px; height: 15px; background: #fff; border: 1px solid #ababab; }
.thumb-v { height: 199px; background: #fff; border: 1px solid #ababab; }
.vscroll .end { margin-top: auto; }
.hscroll { flex: none; width: 486px; display: flex; background: #dadada; margin-right: 21px; }
.thumb-h { width: 207px; background: #fff; border: 1px solid #ababab; }
.hscroll .end { margin-left: auto; }

/* sheet tabs */
.sheetbar { flex: none; display: flex; align-items: center; height: 28px; font-size: 13px; position: relative; }
.sheetbar::before { content: ""; position: absolute; left: 0; right: 21px; top: 0; border-top: 1px solid #9b9b9b; }
.sheetnav { width: 100px; display: flex; gap: 24px; padding-left: 28px; }
.sheet-tabs { display: flex; height: 28px; position: relative; align-items: flex-start; }
.sheet-tabs button { height: 20px; margin-top: 3px; padding: 0 12px 0 11px; border-right: 1px solid #ababab; white-space: nowrap; }
.sheet-tabs .latin { padding: 0 13px; }
.sheet-tabs .on { height: 25px; margin: 0; padding: 0 12px; background: #fff; color: #217346; border: 0; border-left: 1px solid #ababab; border-bottom: 2px solid #217346; }
.sheet-tabs .tint { height: 22px; padding: 0 11px; color: #111; border: 1px solid #e6e6e6; border-right-color: #ababab; background: #bdd7ee; background-clip: padding-box; }
.sheet-tabs .orange { background-color: #f4b084; }
.add { margin-left: 32px; }
.sheetbar .grip { margin-left: auto; }

/* format pane */
.pane { flex: none; width: 280px; margin: 12px 0 3px; border-left: 1px solid #c0c0c0; padding: 9px 8px 17px 13px; display: flex; flex-direction: column; color: #444; }
.pane-head { display: flex; gap: 7px; align-items: center; height: 30px; }
.pane-head h2 { flex: 1; margin: 0; font-size: 21px; line-height: 30px; font-weight: 400; color: #217346; }
.pane-head button { height: 22px; align-self: flex-start; }
.pane-sub { align-self: flex-start; margin-left: 4px; gap: 6px; height: 18px; font-weight: 700; color: #217346; }
.pane-icons { display: flex; gap: 19px; height: 28px; margin: 13px 0 5px 7px; align-items: flex-start; }
.fill-tab { color: #217346; }
.paint { fill: #217346; }
.pane-icons button:last-child svg { margin: 1px 0; }
.notch { margin: 0 0 -1px 9px; }
.pane-body { flex: 1; min-height: 0; display: flex; justify-content: space-between; margin-left: 7px; border-top: 1px solid #c6c6c6; padding-top: 6px; overflow: hidden; }
.pane-body .vscroll { margin-right: 2px; height: 631px; max-height: 100%; }
.pane-body .thumb-v { flex: none; height: 484px; }
.options { width: 229px; }
fieldset { border: 0; margin: 0; padding: 0 0 0 14px; }
fieldset + fieldset { margin-top: 11px; }
legend { display: flex; align-items: center; gap: 8px; margin: 0 0 8px -14px; padding: 0; height: 19px; font-weight: 700; color: #217346; }
.opt { display: flex; align-items: center; height: 25px; padding-left: 1px; }
.opt input { margin-right: 5px; }
.opt.tall { height: 28px; padding-left: 0; }
input[type="radio"], input[type="checkbox"] { appearance: none; margin: 0; flex: none; width: 12px; height: 12px; border: 1px solid #ababab; background: #fff; display: grid; place-items: center; }
input[type="radio"] { border-radius: 50%; }
input[type="radio"]:checked::before { content: ""; width: 6px; height: 6px; border-radius: 50%; background: #666; }
input[type="checkbox"] { width: 13px; height: 13px; }
input[type="checkbox"]:checked::before { content: ""; width: 8px; height: 4px; border: solid #666; border-width: 0 0 2px 2px; transform: translateY(-1px) rotate(-45deg); }
.opt > input[type="radio"], .opt > input[type="checkbox"] { margin-right: 5px; }
.flyout input[type="checkbox"] { width: 14px; height: 14px; border-color: #777; }
.flyout input[type="checkbox"]:checked::before { border-color: #4a7ebb; }
hr { border: 0; border-top: 1px solid #d8d8d8; margin: 4px 0; }
.row { display: flex; align-items: center; height: 32px; padding-left: 10px; }
.row:has(.pick) { height: 33px; }
.row > label { margin-right: auto; }
.pick { width: 44px; height: 27px; gap: 6px; padding-left: 1px; background: #fdfdfd; border: 1px solid #ababab; color: #666; }
.pick .paint { fill: #4a7ebb; }
.spin { display: flex; align-items: center; justify-content: space-between; width: 103px; height: 26px; padding: 0 4px 0 7px; background: #fdfdfd; border: 1px solid #ababab; }
.spin input { width: 70px; }
.slide { width: 36px; height: 12px; margin: 0 5px 0 0; appearance: none; background: linear-gradient(#ababab, #ababab) center / 100% 1px no-repeat; }
.slide::-webkit-slider-thumb { appearance: none; width: 2px; height: 10px; background: #666; }
.drop { display: flex; align-items: center; width: 67px; height: 23px; padding: 0 5px; background: #fdfdfd; border: 1px solid #ababab; }
.drop select { appearance: none; flex: 1; min-width: 0; border: 0; padding: 0; background: none; outline: 0; color: #222; }
.drop.narrow { width: 55px; }

/* status bar */
.status { flex: none; display: flex; align-items: center; gap: 18px; height: 20px; padding: 0 14px 2px 7px; background: #f1f1f1; border-top: 1px solid #c0c0c0; }
.views { display: flex; margin: 0 0 -2px auto; align-self: stretch; }
.views button { width: 38px; }
.views .on { background: #c6c6c6; }
.zoom { display: flex; align-items: center; gap: 4px; margin-left: -15px; }
.zoom input { appearance: none; width: 100px; height: 10px; margin: 0; background: linear-gradient(#ababab, #ababab) center / 100% 1px no-repeat; }
.zoom input::-webkit-slider-thumb { appearance: none; width: 4px; height: 10px; background: #666; }
.zoom span { margin-left: 12px; font-size: 13px; }

/* overlays */
.notes { position: absolute; right: 0; top: 0; pointer-events: none; }
.watermark { position: absolute; right: 11px; bottom: 10px; display: flex; align-items: center; gap: 1px; opacity: .85; }
.watermark strong, .watermark em { display: block; font-style: normal; font-weight: 700; white-space: nowrap; }
.watermark strong { font-size: 21px; line-height: 24px; color: #4b8fd3; }
.watermark em { font: 400 17px/20px "Liberation Sans", sans-serif; color: #4bb567; -webkit-text-stroke: 1px #4bb567; }
```
